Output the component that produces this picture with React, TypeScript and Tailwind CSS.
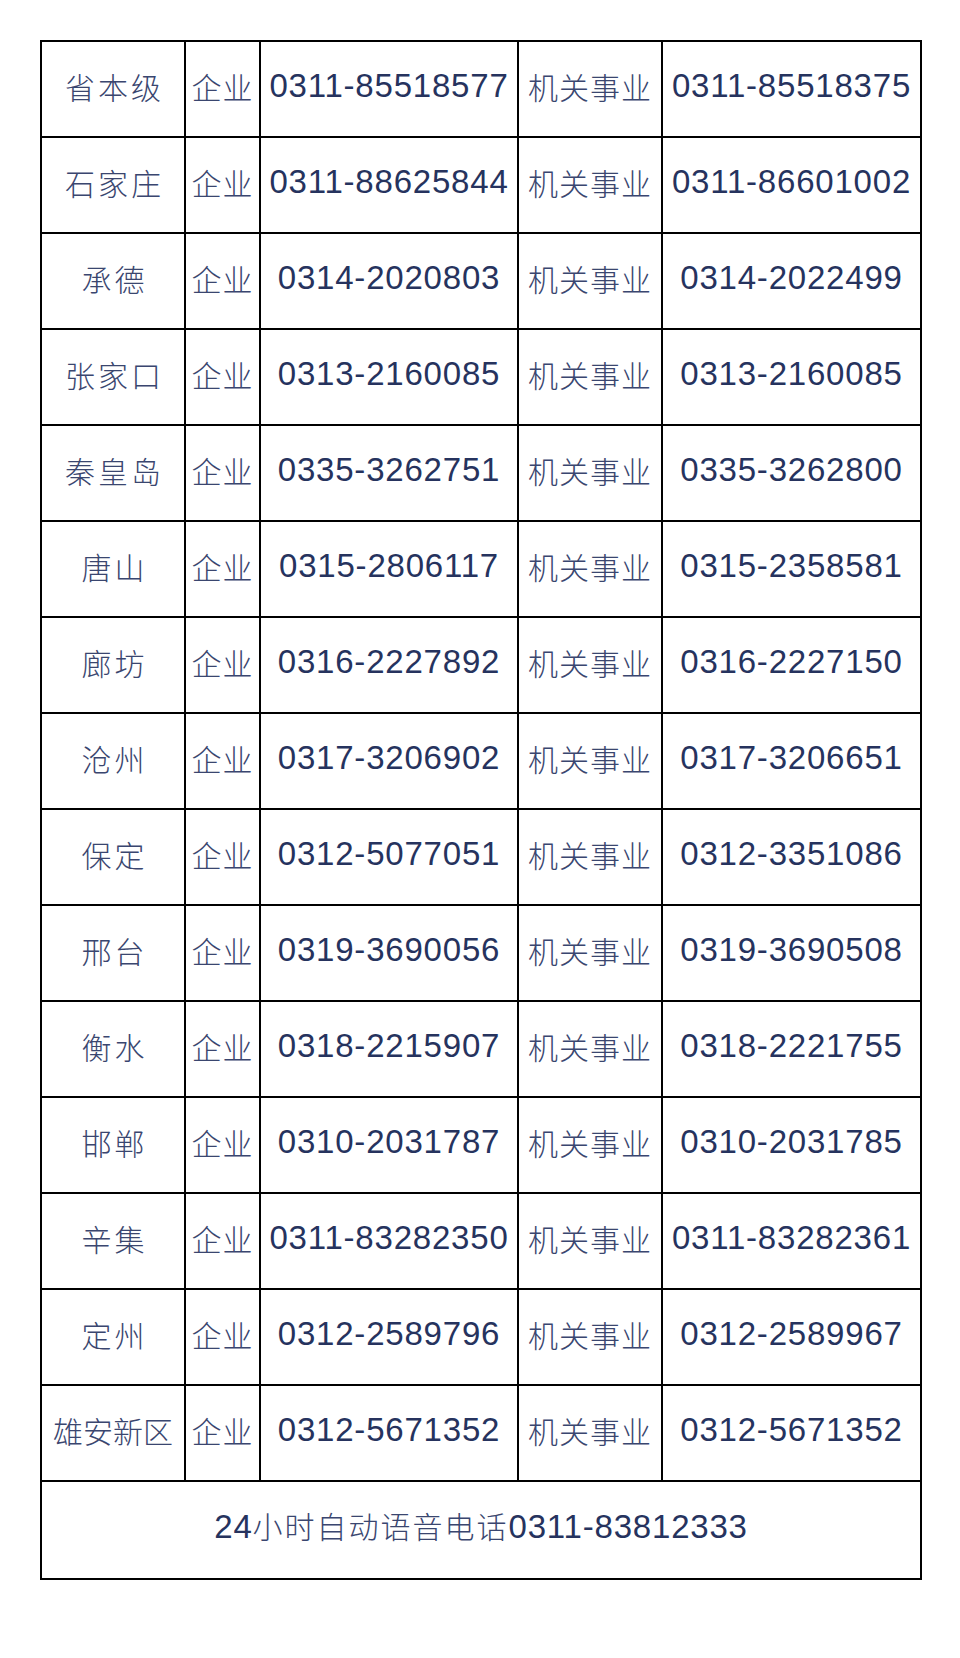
const rows: [string, string, string][] = [
  ['省本级', '0311-85518577', '0311-85518375'],
  ['石家庄', '0311-88625844', '0311-86601002'],
  ['承德', '0314-2020803', '0314-2022499'],
  ['张家口', '0313-2160085', '0313-2160085'],
  ['秦皇岛', '0335-3262751', '0335-3262800'],
  ['唐山', '0315-2806117', '0315-2358581'],
  ['廊坊', '0316-2227892', '0316-2227150'],
  ['沧州', '0317-3206902', '0317-3206651'],
  ['保定', '0312-5077051', '0312-3351086'],
  ['邢台', '0319-3690056', '0319-3690508'],
  ['衡水', '0318-2215907', '0318-2221755'],
  ['邯郸', '0310-2031787', '0310-2031785'],
  ['辛集', '0311-83282350', '0311-83282361'],
  ['定州', '0312-2589796', '0312-2589967'],
  ['雄安新区', '0312-5671352', '0312-5671352'],
];

const cjk = "font-['Noto_Sans_CJK_SC',sans-serif] font-light text-[30px] text-[#3a466f]";
const num = "font-['Liberation_Sans',Arial,sans-serif] text-[33px] text-[#26335e] tracking-[0.8px]";
const cell = 'border-2 border-black text-center align-middle p-0 pb-[6px] whitespace-nowrap';

export default function App() {
  return (
    <div className="w-[960px] h-[1658px] bg-white pt-[40px] pl-[40px]">
      <table className="table-fixed border-collapse w-[880px]">
        <colgroup>
          <col className="w-[144px]" />
          <col className="w-[75px]" />
          <col className="w-[258px]" />
          <col className="w-[144px]" />
          <col className="w-[259px]" />
        </colgroup>
        <tbody>
          {rows.map(([city, a, b]) => (
            <tr key={city} className="h-[96px]">
              <td className={`${cell} ${cjk} ${city.length > 3 ? 'tracking-[0px]' : 'tracking-[3px] pl-[3px]'}`}>{city}</td>
              <td className={`${cell} ${cjk} tracking-[1px]`}>企业</td>
              <td className={`${cell} ${num}`}>{a}</td>
              <td className={`${cell} ${cjk} tracking-[1px]`}>机关事业</td>
              <td className={`${cell} ${num}`}>{b}</td>
            </tr>
          ))}
          <tr className="h-[98px]">
            <td colSpan={5} className={cell}>
              <span className={num}>24</span>
              <span className={`${cjk} tracking-[2px]`}>小时自动语音电话</span>
              <span className={num}>0311-83812333</span>
            </td>
          </tr>
        </tbody>
      </table>
    </div>
  );
}
